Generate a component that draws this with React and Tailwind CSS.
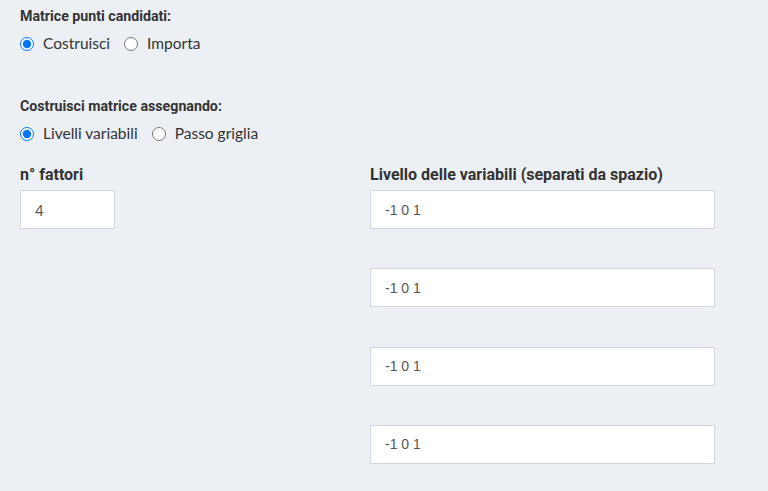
import React from "react";

const labelFont = { fontFamily: "Lato, 'Noto Sans', sans-serif" };
const headFont = { fontFamily: "Roboto, 'Noto Sans', sans-serif" };

const RadioGroup = ({ name, options, checked }) => (
  <div className="flex items-center h-[20px] text-[15.5px] text-[#333]">
    {options.map((opt) => (
      <label key={opt} className="flex items-center mr-[14px] cursor-pointer">
        <input
          type="radio"
          name={name}
          defaultChecked={opt === checked}
          className="w-[14px] h-[14px] m-0 mr-[9px]"
        />
        <span>{opt}</span>
      </label>
    ))}
  </div>
);

const Heading = ({ children, className = "" }) => (
  <div className={`font-bold leading-[20px] ${className}`} style={headFont}>
    {children}
  </div>
);

export default function App() {
  const levels = ["-1 0 1", "-1 0 1", "-1 0 1", "-1 0 1"];

  return (
    <div
      className="min-h-screen bg-[#ecf0f5] pl-[20px] pt-[6px] text-[#333]"
      style={labelFont}
    >
      {/* candidate points matrix */}
      <Heading className="text-[14.2px]">Matrice punti candidati:</Heading>
      <div className="mt-[8px]">
        <RadioGroup name="matrice" options={["Costruisci", "Importa"]} checked="Costruisci" />
      </div>

      <Heading className="mt-[42px] text-[14.2px]">Costruisci matrice assegnando:</Heading>
      <div className="mt-[8px]">
        <RadioGroup
          name="assegna"
          options={["Livelli variabili", "Passo griglia"]}
          checked="Livelli variabili"
        />
      </div>

      {/* factors + levels */}
      <div className="flex mt-[21px]">
        <div className="w-[350px]">
          <Heading className="text-[16px]">n° fattori</Heading>
          <input
            type="number"
            defaultValue={4}
            className="mt-[5px] w-[95px] h-[39px] bg-white border border-[#d2d6de] pl-[14px] text-[15px] text-[#555] outline-none"
          />
        </div>
        <div className="w-[345px]">
          <Heading className="text-[16px]">Livello delle variabili (separati da spazio)</Heading>
          <div className="mt-[5px] flex flex-col gap-[39.3px]">
            {levels.map((v, i) => (
              <input
                key={i}
                type="text"
                defaultValue={v}
                className="w-[345px] h-[39px] bg-white border border-[#d2d6de] pl-[14px] text-[14px] text-[#555] outline-none"
                style={{ fontFamily: "'Liberation Sans', Arial, sans-serif" }}
              />
            ))}
          </div>
        </div>
      </div>
    </div>
  );
}
